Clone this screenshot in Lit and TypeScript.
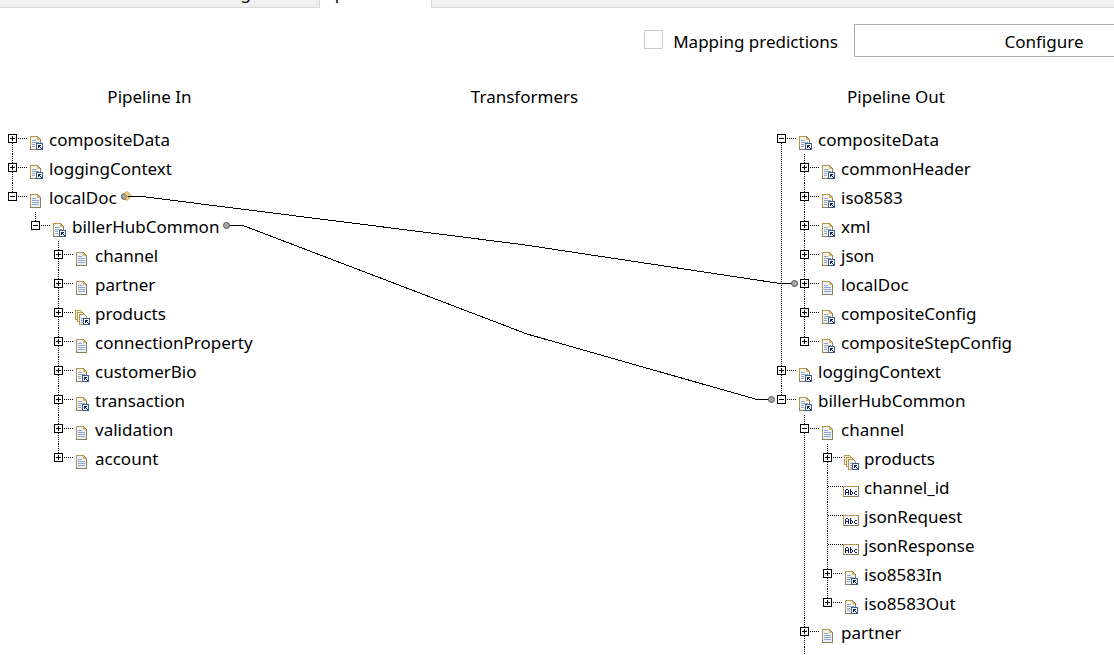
import { LitElement, html, svg, css, nothing } from "lit";
import { customElement, property } from "lit/decorators.js";

type Kind = "doc" | "ref" | "list" | "abc";
interface Node {
  name: string;
  kind: Kind;
  children?: Node[];
}

const n = (name: string, kind: Kind, children?: Node[]): Node => ({ name, kind, children });

const PIPELINE_IN: Node[] = [
  n("compositeData", "ref"),
  n("loggingContext", "ref"),
  n("localDoc", "doc", [
    n("billerHubCommon", "ref", [
      n("channel", "doc"),
      n("partner", "doc"),
      n("products", "list"),
      n("connectionProperty", "doc"),
      n("customerBio", "ref"),
      n("transaction", "ref"),
      n("validation", "doc"),
      n("account", "doc"),
    ]),
  ]),
];

const PIPELINE_OUT: Node[] = [
  n("compositeData", "ref", [
    n("commonHeader", "ref"),
    n("iso8583", "ref"),
    n("xml", "ref"),
    n("json", "ref"),
    n("localDoc", "doc"),
    n("compositeConfig", "ref"),
    n("compositeStepConfig", "ref"),
  ]),
  n("loggingContext", "ref"),
  n("billerHubCommon", "ref", [
    n("channel", "doc", [
      n("products", "list"),
      n("channel_id", "abc"),
      n("jsonRequest", "abc"),
      n("jsonResponse", "abc"),
      n("iso8583In", "ref"),
      n("iso8583Out", "ref"),
    ]),
    n("partner", "doc"),
    n("products", "list"),
  ]),
];

// Small arrow badge marking a document reference, 7 by 7 pixels.
const shortcut = svg`
  <rect x="8.5" y="8.5" width="6" height="6" fill="#f4f7fc" stroke="#3f5b8f"/>
  <path d="M10 10h3v1h-1v1h1v1h1v1h-1v-1h-1v-1h-1v1h-1z" fill="#14264f"/>`;

const glyphs = {
  doc: svg`
    <path d="M2.5 1.5h7l3 3v10h-10z" fill="#e9f0fa" stroke="#8b7d55"/>
    <path d="M2.5 12V1.5H9" fill="none" stroke="#b8974a"/>
    <path d="M9 2h1v1h1v1h1v1H9z" fill="#e0b75c"/>
    <path d="M4 5.5h4M4 7.5h7M4 9.5h7M4 11.5h7" stroke="#8fa6cf"/>`,
  ref: svg`
    <path d="M2.5 1.5h7l3 3v10h-10z" fill="#f3f4ee" stroke="#8b7d55"/>
    <path d="M2.5 12V1.5H9" fill="none" stroke="#b8974a"/>
    <path d="M9 2h1v1h1v1h1v1H9z" fill="#e0b75c"/>
    <path d="M4 5.5h4M4 7.5h7M4 9.5h3M4 11.5h3" stroke="#8fa6cf"/>
    <path d="M8 15h6v1H8z" fill="#fff"/>
    ${shortcut}`,
  list: svg`
    <path d="M1.500 1.500h5l2 2v7h-7z" fill="#fbf4df" stroke="#b8974a"/>
    <path d="M3.500 3.500h5l2 2v7h-7z" fill="#fbf4df" stroke="#b8974a"/>
    <path d="M5.500 5.500h5l2 2v8h-7z" fill="#eef3fb" stroke="#b8974a"/>
    <path d="M7 9.500h4M7 11.500h2M7 13.500h2" stroke="#8fa6cf"/>
    <g transform="translate(1 1)">${shortcut}</g>`,
  abc: svg`
    <rect x=".5" y="3.5" width="15" height="10" fill="#f8fafd" stroke="#8b7d55"/>
    <path d="M.5 13V3.5H15" fill="none" stroke="#b8974a"/>
    <path d="M2.500 12V7M5.500 12V7M3 6.500h2M3 9.500h2M7.500 6v6M8 8.500h1M8 11.500h1M9.500 9v2M11.500 9v2M12 8.500h2M12 11.500h2" fill="none" stroke="#101f58"/>`,
};

@customElement("pipeline-tree")
export class PipelineTree extends LitElement {
  @property({ attribute: false }) nodes: Node[] = [];

  static styles = css`
    :host { display: block; }
    ul { list-style: none; margin: 0; padding: 0; }
    ul ul { margin-left: 23px; }
    li {
      background: repeating-linear-gradient(#000 0 1px, transparent 1px 2px) 4px 0 / 1px 100% no-repeat;
    }
    li:last-child { background-size: 1px 14px; }
    .root > li:first-child { background-position: 4px 14px; }
    .row { display: flex; align-items: center; height: 29px; white-space: nowrap; }
    .toggle {
      box-sizing: border-box;
      width: 9px; height: 9px;
      margin: 0 0 2px; padding: 0;
      border: 1px solid #000; border-radius: 0;
      background:
        linear-gradient(#000, #000) center / 5px 1px no-repeat,
        #fff;
    }
    .toggle.closed {
      background:
        linear-gradient(#000, #000) center / 5px 1px no-repeat,
        linear-gradient(#000, #000) center / 1px 5px no-repeat,
        #fff;
    }
    .dots {
      width: 11px; height: 1px; margin-bottom: 2px;
      background: repeating-linear-gradient(90deg, transparent 0 1px, #000 1px 2px);
    }
    .dots.long { width: 16px; margin-left: 4px; }
    .icon { display: block; width: 18px; height: 18px; margin-top: 9px; margin-right: 3px; }
  `;

  private branch(items: Node[], root = false): unknown {
    return html`<ul class=${root ? "root" : "sub"}>
      ${items.map((d) => html`<li>
        <div class="row">
          ${d.kind === "abc"
            ? html`<span class="dots long"></span>`
            : html`<button class="toggle ${d.children ? "open" : "closed"}" aria-label=${d.name}
                  aria-expanded=${d.children ? "true" : "false"}></button><span class="dots"></span>`}
          <svg class="icon" viewBox="0 0 18 18" shape-rendering="crispEdges" aria-hidden="true">${glyphs[d.kind]}</svg>
          <span class="name">${d.name}</span>
        </div>
        ${d.children ? this.branch(d.children) : nothing}
      </li>`)}
    </ul>`;
  }

  render() {
    return this.branch(this.nodes, true);
  }
}

@customElement("app-root")
export class AppRoot extends LitElement {
  static styles = css`
    :host {
      display: flex; flex-direction: column;
      height: 100vh; overflow: hidden;
      background: #fff; color: #000;
      font: 17px/24px "Noto Sans", "Open Sans", sans-serif;
    }
    .tabs { display: flex; flex: none; height: 8px; overflow: hidden; }
    .tab {
      display: flex; align-items: flex-end; justify-content: flex-end;
      box-sizing: border-box; padding: 0 0 2px;
      border: 0 solid #d9d9d9; border-bottom-width: 1px;
      background: #f0f0f0; font: inherit; color: inherit;
    }
    .first { width: 320px; padding-right: 68px; border-right-width: 1px; }
    .active { width: 111px; justify-content: flex-start; background: #fff; border-bottom-color: #fff; }
    .rest { flex: 1; border-left-width: 1px; }
    .tools { display: flex; flex: none; align-items: center; justify-content: flex-end; margin-top: 16px; height: 33px; }
    .tick {
      appearance: none; box-sizing: border-box;
      width: 19px; height: 19px; margin: 0 10px 4px 0;
      border: 1px solid #ccc; background: #fff;
    }
    .check { display: flex; align-items: center; margin-right: 16px; padding-top: 2px; }
    .configure {
      box-sizing: border-box; width: 380px; height: 33px; margin-right: -120px; flex: none;
      border: 1px solid #adadad; border-radius: 0; background: #fff; font: inherit; color: inherit;
      padding: 2px 0 0;
    }
    .map { display: grid; grid-template-columns: 299fr 451fr 364fr; flex: 1; position: relative; align-content: start; }
    .head { margin: 28px 0 16px; font: inherit; text-align: center; }
    .head:nth-child(3) { padding-right: 72px; }
    .in { padding-left: 8px; }
    .out { padding-left: 27px; }
    .links { position: absolute; left: 0; top: 0; width: 100%; height: 598px; pointer-events: none; }
  `;

  render() {
    return html`
      <nav class="tabs">
        <button class="tab first">Routing</button>
        <button class="tab active">Pipeline</button>
        <span class="tab rest"></span>
      </nav>
      <div class="tools">
        <label class="check"><input class="tick" type="checkbox" />Mapping predictions</label>
        <button class="configure">Configure</button>
      </div>
      <main class="map">
        <h2 class="head">Pipeline In</h2>
        <h2 class="head">Transformers</h2>
        <h2 class="head">Pipeline Out</h2>
        <pipeline-tree class="in" .nodes=${PIPELINE_IN}></pipeline-tree>
        <div></div>
        <pipeline-tree class="out" .nodes=${PIPELINE_OUT}></pipeline-tree>
        <svg class="links" viewBox="0 57 1114 598" preserveAspectRatio="none" aria-hidden="true">
          <g fill="none" stroke="#000" shape-rendering="crispEdges">
            <path d="M128 196.500H142L522 244.500L780 283.500H792"/>
            <path d="M229 225.500H243L527 334L757 399.500H769"/>
          </g>
          <g fill="#a8a8a8" stroke="#555">
            <circle cx="124.500" cy="196.500" r="3"/>
            <circle cx="226.500" cy="225.500" r="3"/>
            <circle cx="794.500" cy="283.500" r="3"/>
            <circle cx="771.500" cy="399.500" r="3"/>
          </g>
          <path d="M127 191.500l4.500 4.500-4.500 4.500-1.500-1.500 2-3-3.500-2z" fill="#f6dc84" stroke="#b0903c"/>
          <path d="M128 196.500h6" stroke="#000"/>
        </svg>
      </main>`;
  }
}
